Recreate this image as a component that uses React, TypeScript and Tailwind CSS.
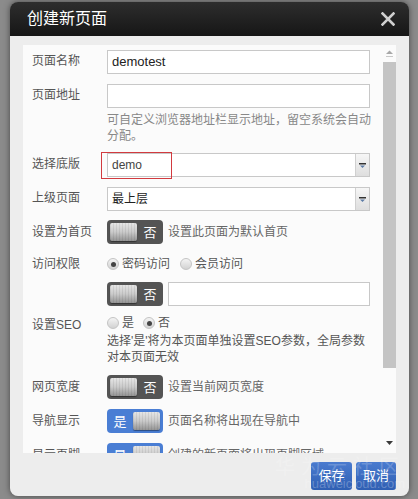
import React from 'react';

const FONT = '"Liberation Sans", "Noto Sans CJK SC", sans-serif';

const Label: React.FC<{ text: string; className?: string }> = ({ text, className = '' }) => (
  <div className={`w-[75px] shrink-0 text-[12px] text-[#555] leading-[20px] ${className}`}>{text}</div>
);

const Knob: React.FC = () => (
  <div className="w-[27px] h-[18px] rounded-[2px] bg-gradient-to-b from-[#e6e6e6] via-[#cacaca] to-[#949494] shadow-[0_1px_1px_rgba(0,0,0,0.4)] overflow-hidden">
    <div className="w-full h-full bg-[repeating-linear-gradient(90deg,rgba(0,0,0,0.07)_0px,rgba(0,0,0,0.07)_1px,transparent_1px,transparent_3px)]" />
  </div>
);

const Toggle: React.FC<{ on?: boolean }> = ({ on }) =>
  on ? (
    <div className="w-[56px] h-[24px] shrink-0 rounded-[4px] bg-[#4a7ed4] flex items-center pr-[3px]">
      <span className="flex-1 text-center text-[13px] text-white leading-none">是</span>
      <Knob />
    </div>
  ) : (
    <div className="w-[56px] h-[24px] shrink-0 rounded-[4px] bg-[#545454] flex items-center pl-[3px]">
      <Knob />
      <span className="flex-1 text-center text-[13px] text-white leading-none">否</span>
    </div>
  );

const Radio: React.FC<{ checked?: boolean }> = ({ checked }) => (
  <span className="w-[12px] h-[12px] rounded-full border border-[#c4c4c4] bg-gradient-to-b from-[#f4f4f4] to-[#d2d2d2] flex items-center justify-center shrink-0">
    {checked && <span className="w-[5px] h-[5px] rounded-full bg-[#444]" />}
  </span>
);

const SelectArrow: React.FC = () => (
  <div className="w-[14px] h-full border-l border-[#d0d0d0] bg-gradient-to-b from-[#f6f6f6] to-[#dedede] flex items-center justify-center">
    <svg width="7" height="5" viewBox="0 0 7 5">
      <rect x="0" y="0" width="7" height="1.5" fill="#333" />
      <path d="M1 2.5 L6 2.5 L3.5 5 Z" fill="#5d7ca6" />
    </svg>
  </div>
);

export default function App() {
  return (
    <div className="w-[418px] h-[499px] bg-[#8b8b8b] pt-[2px] pl-[10px] overflow-hidden" style={{ fontFamily: FONT }}>
      <div className="relative w-[399px] h-[494px] rounded-[8px] overflow-hidden flex flex-col shadow-[0_0_6px_rgba(0,0,0,0.5)]">
        {/* header */}
        <div className="h-[34px] shrink-0 bg-gradient-to-b from-[#2e2e2e] to-[#161616] flex items-center justify-between pl-[17px] pr-[14px]">
          <span className="text-[16px] text-white leading-none">创建新页面</span>
          <svg width="14" height="14" viewBox="0 0 14 14">
            <path d="M1.5 1.5 L12.5 12.5 M12.5 1.5 L1.5 12.5" stroke="#cfcfcf" strokeWidth="2.6" strokeLinecap="square" />
          </svg>
        </div>

        {/* body */}
        <div className="flex-1 bg-[#ededed] pt-[9px] pl-[13px] pr-[13px] flex flex-col">
          <div className="h-[408px] shrink-0 bg-[#fbfbfb] flex">
            <div className="flex-1 overflow-hidden pl-[9px] pt-[5px]">
              {/* 页面名称 */}
              <div className="flex mb-[10px]">
                <Label text="页面名称" className="pt-[1px]" />
                <div className="w-[263px] h-[24px] border border-[#c8c8c8] bg-white flex items-center px-[4px] text-[13px] text-[#222]">demotest</div>
              </div>

              {/* 页面地址 */}
              <div className="flex mb-[9px]">
                <Label text="页面地址" className="pt-[1px]" />
                <div className="w-[263px]">
                  <div className="h-[24px] border border-[#c8c8c8] bg-white" />
                  <p className="mt-[4px] w-[268px] text-[12px] leading-[16px] text-[#888]">可自定义浏览器地址栏显示地址，留空系统会自动分配。</p>
                </div>
              </div>

              {/* 选择底版 */}
              <div className="flex mb-[10px]">
                <Label text="选择底版" className="pt-[1px]" />
                <div className="relative w-[263px] h-[24px] border border-[#c8c8c8] bg-white flex items-center">
                  <span className="flex-1 pl-[4px] text-[12px] text-[#444]">demo</span>
                  <SelectArrow />
                  <div className="absolute left-[-7px] top-[-2px] w-[71px] h-[27px] border border-[#d23a3f]" />
                </div>
              </div>

              {/* 上级页面 */}
              <div className="flex mb-[9px]">
                <Label text="上级页面" className="pt-[1px]" />
                <div className="w-[263px] h-[24px] border border-[#c8c8c8] bg-white flex items-center">
                  <span className="flex-1 pl-[4px] text-[12px] text-[#222]">最上层</span>
                  <SelectArrow />
                </div>
              </div>

              {/* 设置为首页 */}
              <div className="flex mb-[10px] items-center">
                <Label text="设置为首页" />
                <Toggle />
                <span className="ml-[5px] text-[12px] text-[#666]">设置此页面为默认首页</span>
              </div>

              {/* 访问权限 */}
              <div className="flex mb-[8px] items-center h-[20px]">
                <Label text="访问权限" />
                <label className="flex items-center gap-[3px] text-[12px] text-[#555]">
                  <Radio checked />
                  密码访问
                </label>
                <label className="flex items-center gap-[3px] ml-[10px] text-[12px] text-[#555]">
                  <Radio />
                  会员访问
                </label>
              </div>

              <div className="flex mb-[7px] items-center">
                <div className="w-[75px] shrink-0" />
                <Toggle />
                <div className="ml-[5px] w-[202px] h-[24px] border border-[#c8c8c8] bg-white" />
              </div>

              {/* 设置SEO */}
              <div className="flex mb-[10px]">
                <Label text="设置SEO" className="pt-[2px]" />
                <div className="w-[263px]">
                  <div className="flex items-center h-[20px] text-[12px] text-[#555]">
                    <label className="flex items-center gap-[3px]">
                      <Radio />是
                    </label>
                    <label className="flex items-center gap-[3px] ml-[9px]">
                      <Radio checked />否
                    </label>
                  </div>
                  <p className="text-[12px] leading-[16px] text-[#555]">选择'是'将为本页面单独设置SEO参数，全局参数对本页面无效</p>
                </div>
              </div>

              {/* 网页宽度 */}
              <div className="flex mb-[10px] items-center">
                <Label text="网页宽度" />
                <Toggle />
                <span className="ml-[5px] text-[12px] text-[#666]">设置当前网页宽度</span>
              </div>

              {/* 导航显示 */}
              <div className="flex mb-[10px] items-center">
                <Label text="导航显示" />
                <Toggle on />
                <span className="ml-[5px] text-[12px] text-[#666]">页面名称将出现在导航中</span>
              </div>

              {/* 显示页脚 */}
              <div className="flex items-center">
                <Label text="显示页脚" />
                <Toggle on />
                <span className="ml-[5px] text-[12px] text-[#666]">创建的新页面将出现页脚区域</span>
              </div>
            </div>

            {/* scrollbar */}
            <div className="w-[13px] shrink-0 flex flex-col items-center">
              <div className="h-[17px] flex flex-col items-center justify-center gap-[1px]">
                <svg width="7" height="5" viewBox="0 0 7 5">
                  <path d="M0 4 L3.5 0.5 L7 4 Z" fill="#a8a8a8" />
                </svg>
                <div className="w-[7px] h-[1px] bg-[#c8c8c8]" />
              </div>
              <div className="w-[13px] h-[306px] bg-[#c4c4c4]" />
              <div className="flex-1" />
              <svg width="7" height="4" viewBox="0 0 7 4" className="mb-[8px]">
                <path d="M0 0 L7 0 L3.5 4 Z" fill="#3a3a3a" />
              </svg>
            </div>
          </div>

          {/* footer */}
          <div className="flex justify-end gap-[4px] pt-[9px]">
            <button className="w-[41px] h-[28px] rounded-[3px] bg-gradient-to-b from-[#4a7bcf] to-[#2f5fb3] text-white text-[13px]">保存</button>
            <button className="w-[40px] h-[28px] rounded-[3px] bg-gradient-to-b from-[#4a7bcf] to-[#2f5fb3] text-white text-[13px]">取消</button>
          </div>
        </div>

        {/* watermark */}
        <div className="absolute right-[4px] bottom-[6px] flex flex-col items-end pointer-events-none">
          <span className="text-[20px] leading-[20px] text-white/20 tracking-[6px]">华为云社区</span>
          <span className="text-[13px] leading-[13px] text-white/25">huaweicloud.com</span>
        </div>
      </div>
    </div>
  );
}
